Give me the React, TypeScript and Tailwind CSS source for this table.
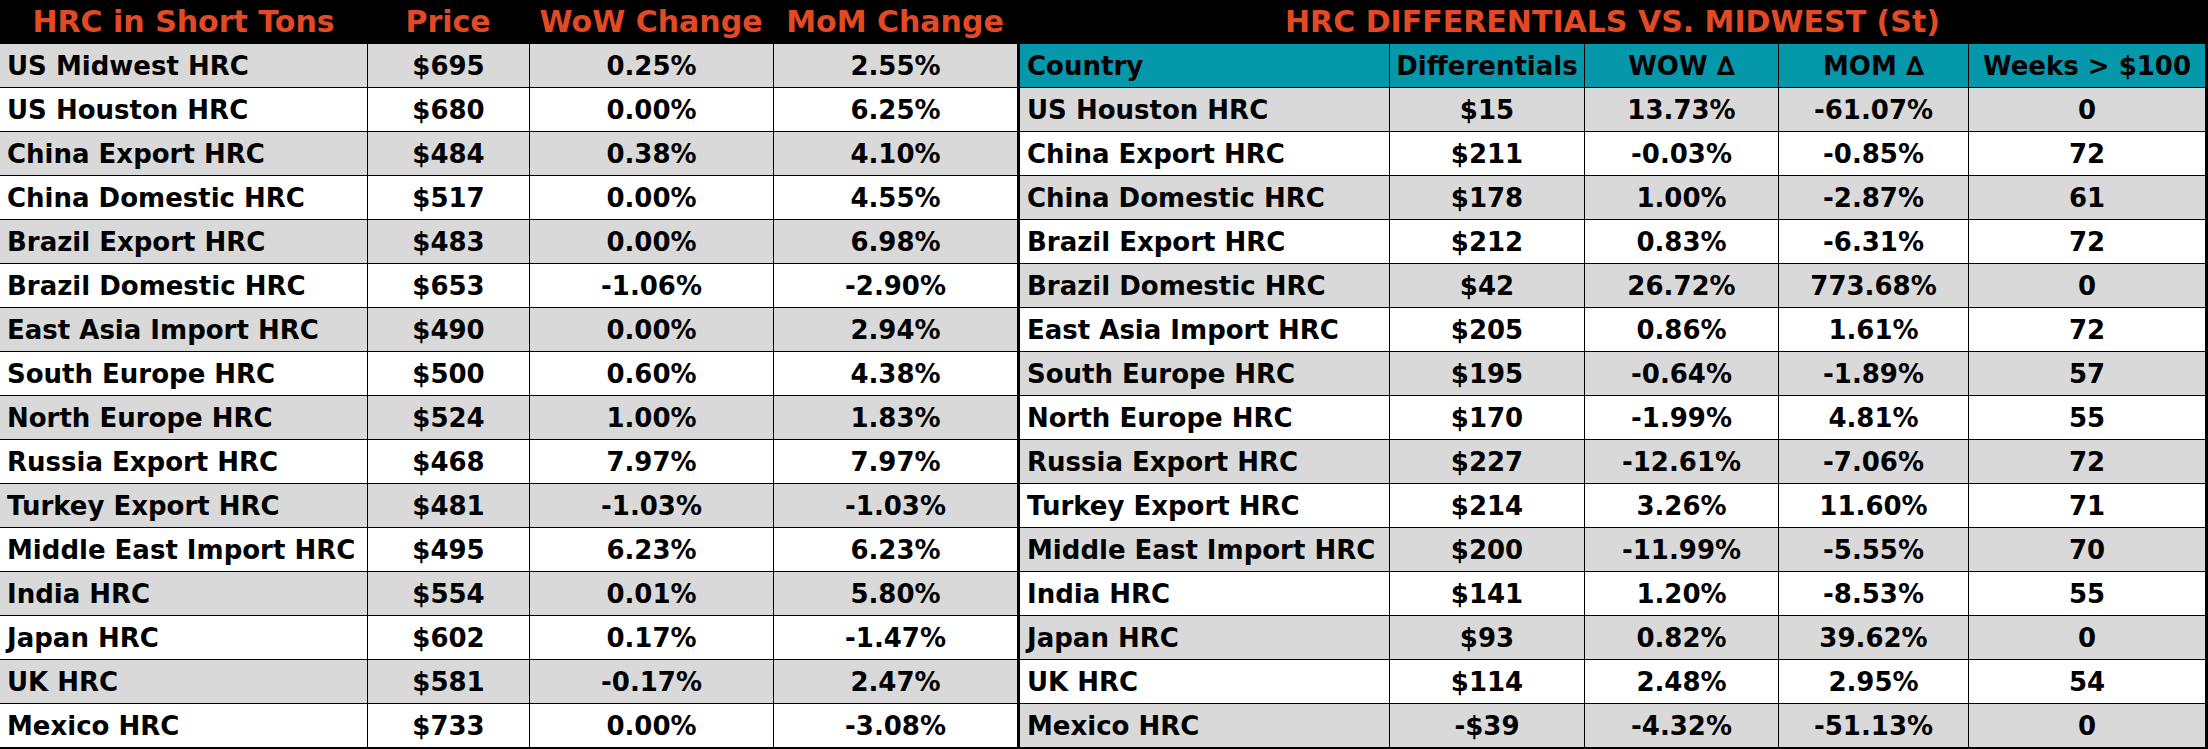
import React from "react";

const prices: [string, string, string, string][] = [
  ["US Midwest HRC", "$695", "0.25%", "2.55%"],
  ["US Houston HRC", "$680", "0.00%", "6.25%"],
  ["China Export HRC", "$484", "0.38%", "4.10%"],
  ["China Domestic HRC", "$517", "0.00%", "4.55%"],
  ["Brazil Export HRC", "$483", "0.00%", "6.98%"],
  ["Brazil Domestic HRC", "$653", "-1.06%", "-2.90%"],
  ["East Asia Import HRC", "$490", "0.00%", "2.94%"],
  ["South Europe HRC", "$500", "0.60%", "4.38%"],
  ["North Europe HRC", "$524", "1.00%", "1.83%"],
  ["Russia Export HRC", "$468", "7.97%", "7.97%"],
  ["Turkey Export HRC", "$481", "-1.03%", "-1.03%"],
  ["Middle East Import HRC", "$495", "6.23%", "6.23%"],
  ["India HRC", "$554", "0.01%", "5.80%"],
  ["Japan HRC", "$602", "0.17%", "-1.47%"],
  ["UK HRC", "$581", "-0.17%", "2.47%"],
  ["Mexico HRC", "$733", "0.00%", "-3.08%"],
];

const diffs: [string, string, string, string, string][] = [
  ["US Houston HRC", "$15", "13.73%", "-61.07%", "0"],
  ["China Export HRC", "$211", "-0.03%", "-0.85%", "72"],
  ["China Domestic HRC", "$178", "1.00%", "-2.87%", "61"],
  ["Brazil Export HRC", "$212", "0.83%", "-6.31%", "72"],
  ["Brazil Domestic HRC", "$42", "26.72%", "773.68%", "0"],
  ["East Asia Import HRC", "$205", "0.86%", "1.61%", "72"],
  ["South Europe HRC", "$195", "-0.64%", "-1.89%", "57"],
  ["North Europe HRC", "$170", "-1.99%", "4.81%", "55"],
  ["Russia Export HRC", "$227", "-12.61%", "-7.06%", "72"],
  ["Turkey Export HRC", "$214", "3.26%", "11.60%", "71"],
  ["Middle East Import HRC", "$200", "-11.99%", "-5.55%", "70"],
  ["India HRC", "$141", "1.20%", "-8.53%", "55"],
  ["Japan HRC", "$93", "0.82%", "39.62%", "0"],
  ["UK HRC", "$114", "2.48%", "2.95%", "54"],
  ["Mexico HRC", "-$39", "-4.32%", "-51.13%", "0"],
];

const App: React.FC = () => {
  return (
    <div
      className="w-[2208px] h-[749px] bg-white flex border-b-2 border-black text-black font-bold text-[26px] leading-none"
      style={{ fontFamily: "'DejaVu Sans', 'Noto Sans', sans-serif" }}
    >
      {/* Left table: spot prices */}
      <div className="w-[1017px] flex flex-col">
        <div className="h-[43px] bg-black grid grid-cols-[367px_162px_244px_244px] items-center text-center text-[30px] text-[#e14a25]">
          <span>HRC in Short Tons</span>
          <span>Price</span>
          <span>WoW Change</span>
          <span>MoM Change</span>
        </div>
        {prices.map((row, i) => (
          <div
            key={row[0]}
            className={`h-[44px] border-t border-black grid grid-cols-[367px_162px_244px_244px] ${
              i % 2 === 0 ? "bg-[#d9d9d9]" : "bg-white"
            }`}
          >
            <div className="flex items-center pl-[7px]">{row[0]}</div>
            <div className="flex items-center justify-center border-l border-black">{row[1]}</div>
            <div className="flex items-center justify-center border-l border-black">{row[2]}</div>
            <div className="flex items-center justify-center border-l border-black">{row[3]}</div>
          </div>
        ))}
      </div>

      {/* Right table: differentials */}
      <div className="flex-1 flex flex-col border-l-[3px] border-r-[3px] border-black">
        <div className="h-[43px] bg-black flex items-center justify-center text-[30px] text-[#e14a25]">
          HRC DIFFERENTIALS VS. MIDWEST (St)
        </div>
        <div className="h-[44px] border-t border-black grid grid-cols-[369px_195px_194px_190px_1fr] bg-[#0597aa]">
          <div className="flex items-center pl-[7px]">Country</div>
          <div className="flex items-center justify-center border-l border-black">Differentials</div>
          <div className="flex items-center justify-center border-l border-black">WOW ∆</div>
          <div className="flex items-center justify-center border-l border-black">MOM ∆</div>
          <div className="flex items-center justify-center border-l border-black">Weeks &gt; $100</div>
        </div>
        {diffs.map((row, i) => (
          <div
            key={row[0]}
            className={`h-[44px] border-t border-black grid grid-cols-[369px_195px_194px_190px_1fr] ${
              i % 2 === 0 ? "bg-[#d9d9d9]" : "bg-white"
            }`}
          >
            <div className="flex items-center pl-[7px]">{row[0]}</div>
            <div className="flex items-center justify-center border-l border-black">{row[1]}</div>
            <div className="flex items-center justify-center border-l border-black">{row[2]}</div>
            <div className="flex items-center justify-center border-l border-black">{row[3]}</div>
            <div className="flex items-center justify-center border-l border-black">{row[4]}</div>
          </div>
        ))}
      </div>
    </div>
  );
};

export default App;
